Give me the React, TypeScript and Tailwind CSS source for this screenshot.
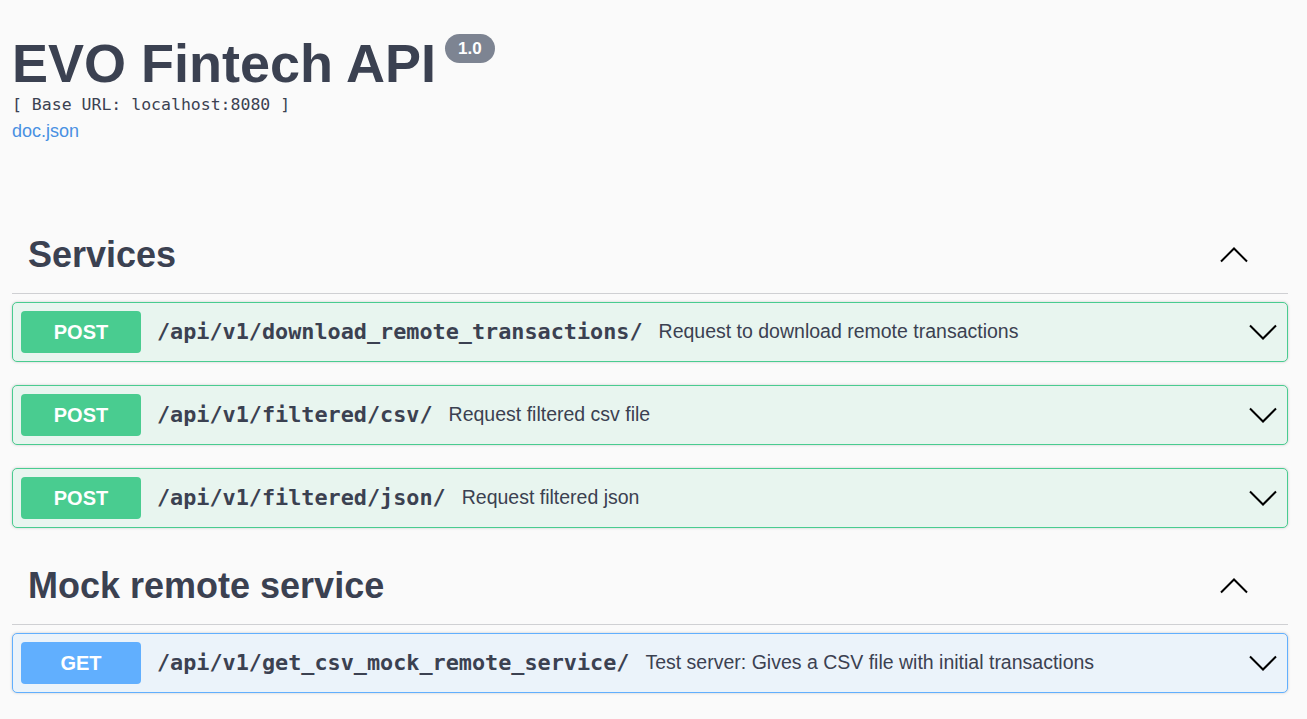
import React from "react";

const sans = { fontFamily: '"Liberation Sans", Arial, sans-serif' };
const mono = { fontFamily: '"DejaVu Sans Mono", "Liberation Mono", monospace' };

function Chevron({ up = false }: { up?: boolean }) {
  return (
    <svg width="28" height="16" viewBox="0 0 28 16" className="shrink-0">
      <polyline
        points={up ? "1,14.5 14,1.5 27,14.5" : "1,1.5 14,14.5 27,1.5"}
        fill="none"
        stroke="#000"
        strokeWidth="2"
      />
    </svg>
  );
}

type Op = { method: "POST" | "GET"; path: string; desc: string };

function OpBlock({ op }: { op: Op }) {
  const isGet = op.method === "GET";
  return (
    <div
      className={
        isGet
          ? "h-[60px] flex items-center border border-[#61affe] bg-[#ebf3fa] rounded-[5px] shadow-[0_0_3px_rgba(0,0,0,0.19)] pl-[8px] pr-[10px]"
          : "h-[60px] flex items-center border border-[#49cc90] bg-[#e8f5ef] rounded-[5px] shadow-[0_0_3px_rgba(0,0,0,0.19)] pl-[8px] pr-[10px]"
      }
    >
      <div
        className={
          isGet
            ? "w-[120px] h-[42px] rounded-[4px] bg-[#61affe] text-white font-bold text-[20px] flex items-center justify-center"
            : "w-[120px] h-[42px] rounded-[4px] bg-[#49cc90] text-white font-bold text-[20px] flex items-center justify-center"
        }
        style={sans}
      >
        {op.method}
      </div>
      <span className="ml-[16px] font-bold text-[21.8px] text-[#3b4151]" style={mono}>
        {op.path}
      </span>
      <span className="ml-[16px] text-[19.5px] text-[#3b4151] flex-1" style={sans}>
        {op.desc}
      </span>
      <Chevron />
    </div>
  );
}

function TagHeader({ title }: { title: string }) {
  return (
    <div className="flex items-center justify-between pl-[16px] pr-[40px] pb-[17px] border-b border-[#cfd0d3]">
      <h2 className="text-[36px] leading-[42px] font-bold text-[#3b4151]" style={sans}>
        {title}
      </h2>
      <Chevron up />
    </div>
  );
}

export default function App() {
  const services: Op[] = [
    {
      method: "POST",
      path: "/api/v1/download_remote_transactions/",
      desc: "Request to download remote transactions",
    },
    { method: "POST", path: "/api/v1/filtered/csv/", desc: "Request filtered csv file" },
    { method: "POST", path: "/api/v1/filtered/json/", desc: "Request filtered json" },
  ];
  const mock: Op[] = [
    {
      method: "GET",
      path: "/api/v1/get_csv_mock_remote_service/",
      desc: "Test server: Gives a CSV file with initial transactions",
    },
  ];
  return (
    <div className="min-h-screen w-full bg-[#fafafa] text-[#3b4151]" style={sans}>
      <div className="pl-[12px] pr-[19px]">
        <div className="pt-[36px] flex items-start">
          <h1 className="text-[54px] leading-[54px] font-bold text-[#3b4151]">EVO Fintech API</h1>
          <span className="ml-[9px] -mt-[2px] h-[29px] px-[13px] rounded-full bg-[#7d8492] text-white text-[17px] font-bold flex items-center">
            1.0
          </span>
        </div>
        <div className="mt-[5px] text-[16.5px] leading-[20px] text-[#3b4151]" style={mono}>
          [ Base URL: localhost:8080 ]
        </div>
        <a className="mt-[6px] block w-fit text-[18px] leading-[21px] text-[#4990e2]" href="#">
          doc.json
        </a>

        <div className="pt-[92px]">
          <TagHeader title="Services" />
          <div className="mt-[8px] flex flex-col gap-[23px]">
            {services.map((op) => (
              <OpBlock key={op.path} op={op} />
            ))}
          </div>
        </div>

        <div className="pt-[37px]">
          <TagHeader title="Mock remote service" />
          <div className="mt-[8px] flex flex-col gap-[23px]">
            {mock.map((op) => (
              <OpBlock key={op.path} op={op} />
            ))}
          </div>
        </div>
      </div>
    </div>
  );
}
